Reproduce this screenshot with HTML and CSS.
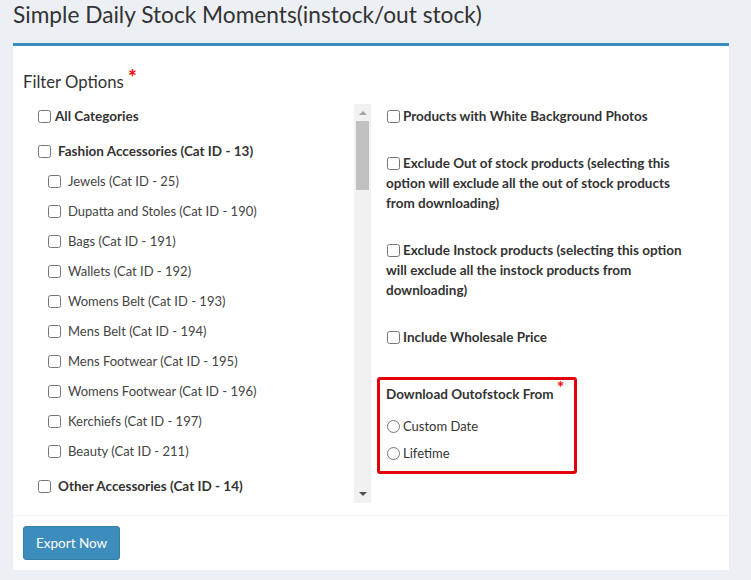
FILE: index.html
```html
<!DOCTYPE html>
<html lang="en">
<head>
    <meta charset="UTF-8">
    <meta name="viewport" content="width=device-width, initial-scale=1.0">
    <title>Simple Daily Stock Moments</title>
    <link rel="stylesheet" href="styles.css">
</head>
<body>
    <h1 class="page-title">Simple Daily Stock Moments(instock/out stock)</h1>
    <div class="box">
        <div class="box-body">
            <div class="filter-title">Filter Options <span class="req">*</span></div>
            <div class="filter-row">
                <div class="cat-scroll">
                    <div class="cat-list">
                        <label class="cat-row cat-all"><input type="checkbox">All Categories</label>
                        <label class="cat-row cat-main"><input type="checkbox">Fashion Accessories (Cat ID - 13)</label>
                        <label class="cat-row cat-sub"><input type="checkbox">Jewels (Cat ID - 25)</label>
                        <label class="cat-row cat-sub"><input type="checkbox">Dupatta and Stoles (Cat ID - 190)</label>
                        <label class="cat-row cat-sub"><input type="checkbox">Bags (Cat ID - 191)</label>
                        <label class="cat-row cat-sub"><input type="checkbox">Wallets (Cat ID - 192)</label>
                        <label class="cat-row cat-sub"><input type="checkbox">Womens Belt (Cat ID - 193)</label>
                        <label class="cat-row cat-sub"><input type="checkbox">Mens Belt (Cat ID - 194)</label>
                        <label class="cat-row cat-sub"><input type="checkbox">Mens Footwear (Cat ID - 195)</label>
                        <label class="cat-row cat-sub"><input type="checkbox">Womens Footwear (Cat ID - 196)</label>
                        <label class="cat-row cat-sub"><input type="checkbox">Kerchiefs (Cat ID - 197)</label>
                        <label class="cat-row cat-sub"><input type="checkbox">Beauty (Cat ID - 211)</label>
                        <label class="cat-row cat-main"><input type="checkbox">Other Accessories (Cat ID - 14)</label>
                    </div>
                    <div class="scrollbar">
                        <span class="arrow-up"></span>
                        <span class="thumb"></span>
                        <span class="arrow-down"></span>
                    </div>
                </div>
                <div class="opt-col">
                    <label class="opt"><input type="checkbox">Products with White Background Photos</label>
                    <label class="opt"><input type="checkbox">Exclude Out of stock products (selecting this option will exclude all the out of stock products from downloading)</label>
                    <label class="opt"><input type="checkbox">Exclude Instock products (selecting this option will exclude all the instock products from downloading)</label>
                    <label class="opt opt-last"><input type="checkbox">Include Wholesale Price</label>
                    <div class="range-box">
                        <div class="range-title">Download Outofstock From <span class="req">*</span></div>
                        <label class="radio-row radio-first"><input type="radio" name="range">Custom Date</label>
                        <label class="radio-row"><input type="radio" name="range">Lifetime</label>
                    </div>
                </div>
            </div>
        </div>
        <div class="box-footer">
            <button class="export-button">Export Now</button>
        </div>
    </div>
</body>
</html>
```

FILE: styles.css
```css
body {
    margin: 0;
    background-color: #ecf0f5;
    font-family: "Source Sans Pro", Lato, sans-serif;
    font-size: 13px;
    color: #333;
}
.page-title {
    margin: 0;
    padding: 2px 13px 0;
    font-size: 22.7px;
    font-weight: 400;
    line-height: 26px;
}
.box {
    margin: 15px 22px 0 13px;
    background-color: #fff;
    border-top: 3px solid #3c8dbc;
    box-shadow: 0 1px 1px rgba(0, 0, 0, 0.1);
}
.box-body {
    padding: 10px 10px 12px;
}
.filter-title {
    margin: 14px 0 10px;
    font-size: 16.7px;
    line-height: 24px;
}
.req {
    color: #f00;
    font-weight: 700;
    font-size: 21px;
    vertical-align: 3px;
    line-height: 0;
}
.filter-row {
    display: flex;
}
.cat-scroll {
    width: 50%;
    height: 399px;
    display: flex;
}
.cat-list {
    flex: 1;
    overflow: hidden;
    padding: 2px 0 0 15px;
}
.cat-row {
    display: flex;
    align-items: center;
    height: 20px;
    line-height: 20px;
    margin-top: 10px;
    white-space: nowrap;
}
.cat-row input {
    width: 13px;
    height: 13px;
    margin: 0 7px 0 0;
}
.cat-all {
    margin-top: 0;
    font-weight: 700;
    font-size: 13.5px;
}
.cat-all input {
    margin-right: 4px;
}
.cat-main {
    margin-top: 15px;
    font-weight: 700;
    font-size: 13.5px;
}
.cat-sub {
    padding-left: 10px;
    color: #444;
}
.scrollbar {
    width: 17px;
    background-color: #f1f1f1;
    display: flex;
    flex-direction: column;
    align-items: center;
}
.arrow-up {
    margin: 7px 0 6px;
    border: 4px solid transparent;
    border-top: 0;
    border-bottom: 4px solid #a3a3a3;
}
.thumb {
    width: 13px;
    height: 69px;
    background-color: #c1c1c1;
}
.arrow-down {
    margin: auto 0 7px;
    border: 4px solid transparent;
    border-bottom: 0;
    border-top: 4px solid #505050;
}
.opt-col {
    width: 50%;
    padding: 2px 15px 0;
    box-sizing: border-box;
}
.opt {
    display: block;
    max-width: 300px;
    margin-bottom: 27px;
    font-weight: 700;
    font-size: 13.5px;
    line-height: 20px;
}
.opt-last {
    margin-bottom: 30px;
}
.opt input, .radio-row input {
    width: 13px;
    height: 13px;
    margin: 0 3px 0 1px;
    vertical-align: -2px;
}
.range-box {
    width: 200px;
    box-sizing: border-box;
    margin-left: -9px;
    padding: 4px 6px 8px;
    border: 3px solid #e3000b;
    border-radius: 3px;
}
.range-title {
    font-weight: 700;
    font-size: 13.5px;
    line-height: 20px;
    white-space: nowrap;
}
.range-title .req {
    font-size: 17px;
    vertical-align: 5px;
}
.radio-row {
    display: block;
    margin-top: 7px;
    line-height: 20px;
}
.radio-first {
    margin-top: 12px;
}
.box-footer {
    border-top: 1px solid #f4f4f4;
    padding: 10px;
}
.export-button {
    height: 34px;
    padding: 0 12px;
    background-color: #3c8dbc;
    border: 1px solid #367fa9;
    border-radius: 3px;
    color: #fff;
    font-family: inherit;
    font-size: 13.5px;
    cursor: pointer;
}
```
